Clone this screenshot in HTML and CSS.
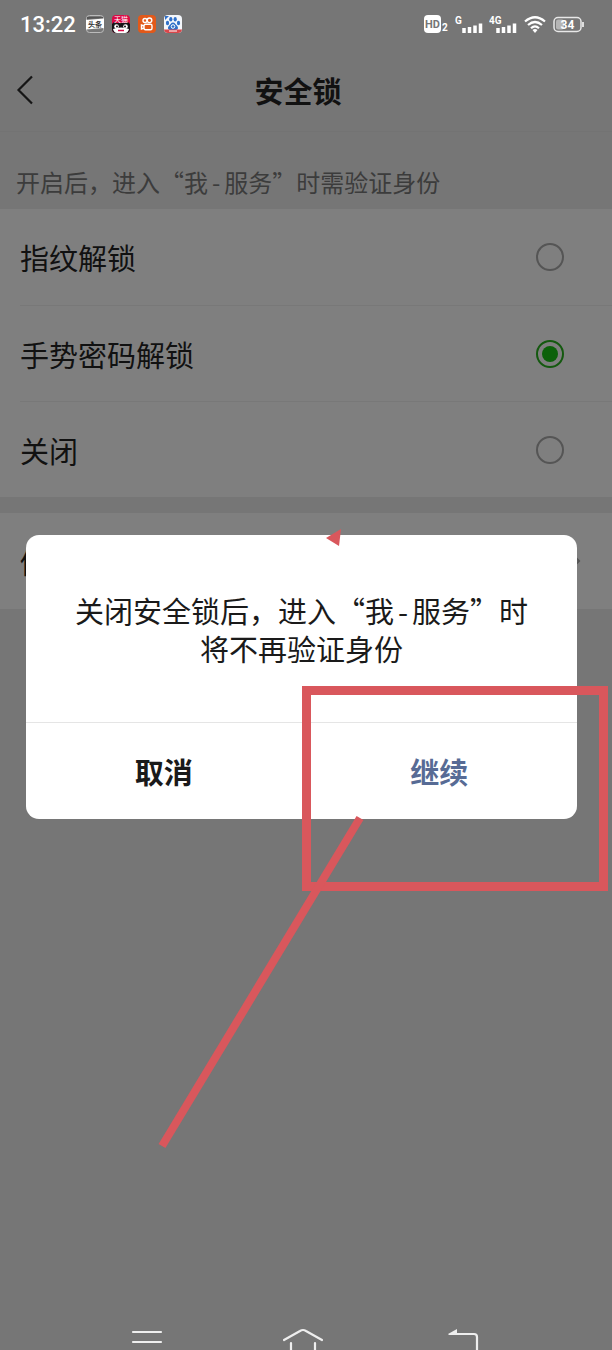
FILE: index.html
```html
<!DOCTYPE html>
<html lang="zh-CN">
<head>
  <meta charset="UTF-8">
  <meta name="viewport" content="width=device-width, initial-scale=1.0">
  <title>安全锁</title>
  <link rel="stylesheet" href="styles.css">
</head>
<body>

  <div class="page">
    <div class="status-bar">
      <span class="time">13:22</span>
      <div class="apps">
        <!-- toutiao -->
        <svg width="18" height="18" viewBox="0 0 18 18">
          <rect x="0.5" y="0.5" width="17" height="17" rx="3" fill="#777" stroke="#bbb"/>
          <path d="M1 2h16v1L1 4z" fill="#555"/>
          <path d="M0 5l18-1.500v9.500L0 14.500z" fill="#fff"/>
          <text x="9" y="12" font-size="7" font-weight="700" text-anchor="middle" fill="#333">头条</text>
        </svg>
        <!-- tmall -->
        <svg width="18" height="18" viewBox="0 0 18 18">
          <rect width="18" height="18" rx="4" fill="#dc0a45"/>
          <path d="M0 9l2-2 2 1h10l2-1 2 2v5a4 4 0 0 1-4 4H4a4 4 0 0 1-4-4z" fill="#161216"/>
          <path d="M1 14q8-3 16 0-1 4-4 4H5q-3 0-4-4z" fill="#fff"/>
          <circle cx="4.500" cy="11.500" r="2.300" fill="#fff"/>
          <circle cx="13.500" cy="11.500" r="2.300" fill="#fff"/>
          <circle cx="5" cy="11.500" r="1" fill="#161216"/>
          <circle cx="13" cy="11.500" r="1" fill="#161216"/>
          <path d="M6 15.500h6" stroke="#dc0a45" stroke-width="1.500"/>
          <text x="9" y="7" font-size="7" text-anchor="middle" fill="#fff">天猫</text>
        </svg>
        <!-- kuaishou -->
        <svg width="18" height="18" viewBox="0 0 18 18">
          <rect width="18" height="18" rx="4" fill="#e2591a"/>
          <g fill="none" stroke="#fff" stroke-width="1.400">
            <circle cx="7" cy="5.500" r="2"/>
            <circle cx="11.500" cy="5.300" r="2.300"/>
            <rect x="6" y="9.300" width="8" height="5.400" rx="1.500"/>
            <path d="M6 11l-2.500-1v4l2.500-1"/>
          </g>
        </svg>
        <!-- baidu -->
        <svg width="18" height="18" viewBox="0 0 18 18">
          <rect width="18" height="18" rx="4" fill="#f4f7fb"/>
          <g fill="#2f6fc8">
            <ellipse cx="3.500" cy="8" rx="1.600" ry="2.200"/>
            <ellipse cx="6.800" cy="4.300" rx="1.600" ry="2.300"/>
            <ellipse cx="11.200" cy="4.300" rx="1.600" ry="2.300"/>
            <ellipse cx="14.500" cy="8" rx="1.600" ry="2.200"/>
            <path d="M9 7.500c2 0 2.500 2 4 3.300 1.800 1.800 1 4.200-1 4.200H6c-2 0-2.800-2.400-1-4.200C6.500 9.500 7 7.500 9 7.500z"/>
            <path d="M1 1h4L1 5z"/>
          </g>
          <circle cx="9" cy="11.500" r="1.800" fill="none" stroke="#fff"/>
          <path d="M0 14.500h18a4 4 0 0 1-4 3.500H4a4 4 0 0 1-4-3.500z" fill="#d9474b"/>
          <path d="M5 16h8" stroke="#fff"/>
        </svg>
      </div>

      <div class="signals">
        <svg width="25" height="18" viewBox="0 0 25 18">
          <rect width="17" height="18" rx="4" fill="#fff"/>
          <text x="8.500" y="13" font-size="11" font-weight="700" text-anchor="middle" fill="#767676">HD</text>
          <text x="18" y="16" font-size="10" font-weight="700" fill="#fff">2</text>
        </svg>
        <svg width="28" height="18" viewBox="0 0 28 18">
          <text x="0" y="9" font-size="10" font-weight="700" fill="#fff">G</text>
          <g stroke="#fff" stroke-width="3.500">
            <path d="M9 13v5M14.500 12v6M20 10.500V18M25.500 8.500V18"/>
          </g>
        </svg>
        <svg width="28" height="18" viewBox="0 0 28 18">
          <text x="0" y="9" font-size="10" font-weight="700" fill="#fff">4G</text>
          <g stroke="#fff" stroke-width="3.500">
            <path d="M9 13v5M14.500 12v6M20 10.500V18M25.500 8.500V18"/>
          </g>
        </svg>
        <svg width="24" height="18" viewBox="0 0 24 18">
          <g fill="none" stroke="#fff" stroke-width="2.200">
            <path d="M2 6.500Q12-2 22 6.500"/>
            <path d="M5 10Q12 4 19 10"/>
            <path d="M8 13.200Q12 9.500 16 13.200"/>
          </g>
          <path d="M9.500 15q2.500-2 5 0L12 18z" fill="#fff"/>
        </svg>
        <svg width="31" height="18" viewBox="0 0 31 18">
          <rect x="1" y="2.500" width="27" height="14" rx="4" fill="none" stroke="#e8e8e8" stroke-width="1.500"/>
          <rect x="3" y="4.500" width="8" height="10" rx="2" fill="#b5b5b5"/>
          <path d="M30 7v5" stroke="#ddd" stroke-width="2"/>
          <text x="14.500" y="14" font-size="12" font-weight="700" text-anchor="middle" fill="#fff">34</text>
        </svg>
      </div>
    </div>

    <header class="header">
      <button class="back" aria-label="返回">
        <svg width="18" height="30" viewBox="0 0 18 30">
          <path d="M16 1.500L2.500 15 16 28.500" fill="none" stroke="#161616" stroke-width="2.200"/>
        </svg>
      </button>
      <h1>安全锁</h1>
    </header>

    <p class="hint">开启后，进入“我<span class="dash">-</span>服务”时需验证身份</p>

    <form class="list">
      <label class="row">指纹解锁<input type="radio" name="lock" value="finger"></label>
      <label class="row">手势密码解锁<input type="radio" name="lock" value="gesture" checked></label>
      <label class="row">关闭<input type="radio" name="lock" value="off"></label>
    </form>

    <div class="list">
      <a class="row link" href="#">修改手势密码
        <svg width="12" height="20" viewBox="0 0 12 20">
          <path d="M2 2l8 8-8 8" fill="none" stroke="#555" stroke-width="2"/>
        </svg>
      </a>
    </div>

    <nav class="nav">
      <button aria-label="菜单">
        <svg width="42" height="22" viewBox="0 0 42 22">
          <path d="M7 4h28M7 14h28" stroke="#eee" stroke-width="2.200" stroke-linecap="round"/>
        </svg>
      </button>
      <button aria-label="主页">
        <svg width="42" height="22" viewBox="0 0 42 22">
          <path d="M1 12L17 3q3-2 6 0l16 9M8 15v7M32 15v7" fill="none" stroke="#eee" stroke-width="2.200" stroke-linecap="round"/>
        </svg>
      </button>
      <button aria-label="后退">
        <svg width="42" height="22" viewBox="0 0 42 22">
          <path d="M11 6h23q3 0 3 3v13" fill="none" stroke="#eee" stroke-width="2.200"/>
          <path d="M8 6l9-5v6H9z" fill="#eee"/>
        </svg>
      </button>
    </nav>
  </div>

  <div class="overlay">
    <div class="dialog" role="dialog" aria-modal="true" aria-labelledby="msg">
      <p class="message" id="msg">关闭安全锁后，进入“我<span class="dash">-</span>服务”时<br>将不再验证身份</p>
      <div class="actions">
        <button class="cancel">取消</button>
        <button class="confirm">继续</button>
      </div>

      <!-- red marks over the dialog -->
      <svg class="tip" width="16" height="18" viewBox="0 0 16 18">
        <path d="M0 9L15 0l-2 17z" fill="#d9575c"/>
      </svg>
      <div class="mark-box"></div>
      <svg class="mark-line" width="210" height="340" viewBox="0 0 210 340">
        <path d="M204 5L6 333" stroke="#d9575c" stroke-width="8"/>
      </svg>
    </div>
  </div>

</body>
</html>
```
FILE: styles.css
```css
* {
  box-sizing: border-box;
}
body {
  margin: 0;
  background-color: #767676;
  color: #111;
  font-family: "Noto Sans CJK SC", sans-serif;
}
button {
  border: 0;
  padding: 0;
  background: none;
  font-family: inherit;
  color: inherit;
}
svg {
  display: block;
}
.page {
  display: flex;
  flex-direction: column;
  min-height: 100vh;
}

/* status bar */
.status-bar {
  display: flex;
  align-items: center;
  height: 48px;
  padding: 0 28px 0 20px;
}
.status-bar svg {
  font-family: Roboto, "Noto Sans CJK SC", sans-serif;
}
.time {
  width: 66px;
  font-family: Roboto, sans-serif;
  font-size: 22px;
  font-weight: 500;
  color: #fff;
}
.apps {
  display: flex;
  gap: 8px;
}
.signals {
  display: flex;
  gap: 6px;
  margin-left: auto;
}

/* header */
.header {
  position: relative;
  display: flex;
  align-items: center;
  justify-content: center;
  height: 84px;
  padding-right: 16px;
  border-bottom: 1px solid #737373;
}
.header h1 {
  margin: 0;
  font-size: 29px;
  font-weight: 700;
}
.back {
  position: absolute;
  left: 16px;
}
.hint {
  margin: 0;
  padding: 32px 16px 9px;
  font-size: 24px;
  line-height: 36px;
  color: #3c3c3c;
}
.dash {
  margin: 0 4px;
}

/* options */
.list {
  margin-bottom: 16px;
  padding-left: 20px;
  background-color: #7f7f7f;
}
.row {
  display: flex;
  align-items: center;
  justify-content: space-between;
  height: 96px;
  padding-right: 48px;
  font-size: 29px;
}
.row + .row {
  border-top: 1px solid #787878;
}
.row input {
  appearance: none;
  display: grid;
  place-items: center;
  width: 28px;
  height: 28px;
  margin: 0;
  border: 2px solid #555;
  border-radius: 50%;
}
.row input:checked {
  border-color: #14590f;
}
.row input:checked::before {
  content: "";
  width: 16px;
  height: 16px;
  border-radius: 50%;
  background-color: #0c610a;
}
.link {
  padding-right: 31px;
  color: inherit;
  text-decoration: none;
}

/* bottom keys */
.nav {
  display: flex;
  justify-content: space-between;
  margin-top: auto;
  padding: 0 130px 0 126px;
}

/* dialog */
.overlay {
  position: fixed;
  inset: 0;
  display: flex;
  align-items: center;
  padding: 4px 35px 0 26px;
}
.dialog {
  position: relative;
  width: 100%;
  background-color: #fff;
  border-radius: 13px;
}
.message {
  margin: 0;
  padding: 56px 0 55px;
  font-size: 29px;
  line-height: 38px;
  text-align: center;
  color: #1a1a1a;
}
.actions {
  display: flex;
  border-top: 1px solid #e5e5e5;
}
.actions button {
  flex: 1;
  height: 96px;
  font-size: 29px;
  font-weight: 700;
}
.cancel {
  color: #1a1a1a;
}
.confirm {
  color: #576b95;
}

.tip {
  position: absolute;
  top: -6px;
  left: 300px;
}
.mark-box {
  position: absolute;
  top: 151px;
  right: -31px;
  bottom: -72px;
  left: 276px;
  border: 9px solid #d9575c;
}
.mark-line {
  position: absolute;
  top: 278px;
  left: 130px;
}
```
